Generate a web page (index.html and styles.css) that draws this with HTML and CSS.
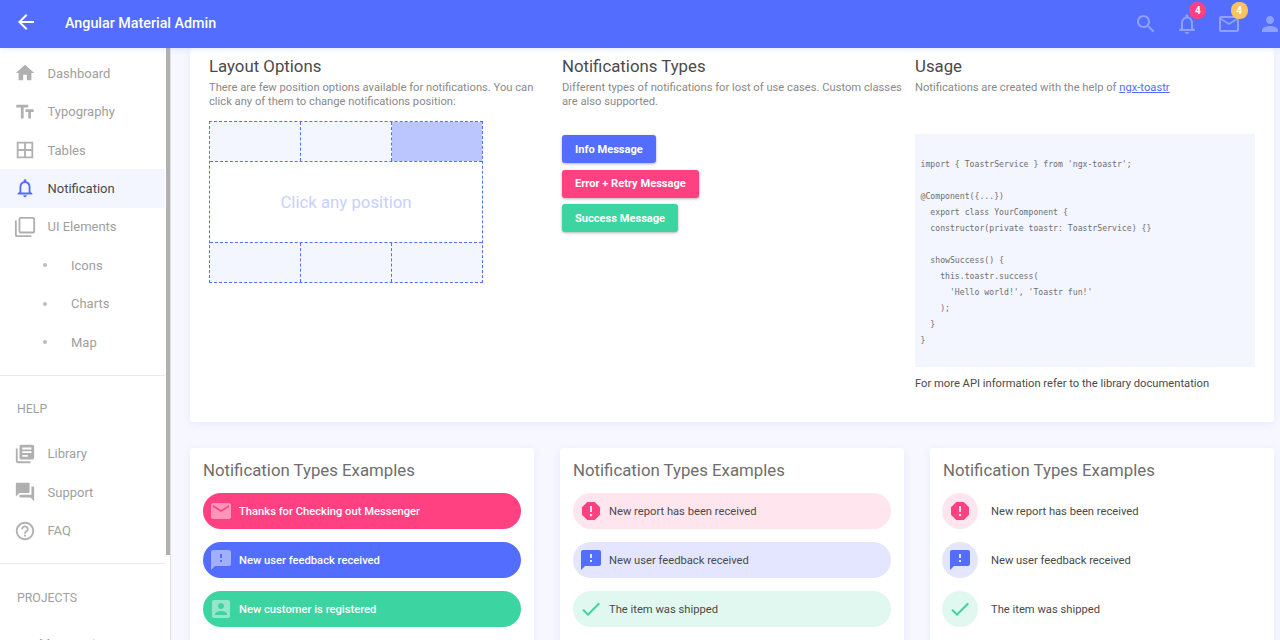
FILE: index.html
```html
<!DOCTYPE html>
<html>
	<head>
		<meta charset="UTF-8">
		<title>Angular Material Admin</title>
		<link rel="stylesheet" href="styles.css">
	</head>

	<body>
		<header class="topbar">
			<svg class="back-icon" viewBox="0 0 24 24"><path d="M20 11H7.83l5.59-5.59L12 4l-8 8 8 8 1.41-1.41L7.83 13H20v-2z"/></svg>
			<div class="brand">Angular Material Admin</div>
			<div class="top-icons">
				<svg viewBox="0 0 24 24"><path d="M15.5 14h-.79l-.28-.27C15.41 12.59 16 11.11 16 9.5 16 5.91 13.09 3 9.5 3S3 5.91 3 9.5 5.91 16 9.5 16c1.61 0 3.09-.59 4.23-1.57l.27.28v.79l5 4.99L20.49 19l-4.99-5zm-6 0C7.01 14 5 11.99 5 9.5S7.01 5 9.5 5 14 7.01 14 9.5 11.99 14 9.5 14z"/></svg>
				<div class="top-icon">
					<svg viewBox="0 0 24 24"><path d="M12 22c1.1 0 2-.9 2-2h-4c0 1.1.9 2 2 2zm6-6v-5c0-3.07-1.63-5.64-4.5-6.32V4c0-.83-.67-1.5-1.5-1.5s-1.5.67-1.5 1.5v.68C7.64 5.36 6 7.92 6 11v5l-2 2v1h16v-1l-2-2zm-2 1H8v-6c0-2.48 1.51-4.5 4-4.5s4 2.02 4 4.5v6z"/></svg>
					<span class="badge badge-pink">4</span>
				</div>
				<div class="top-icon">
					<svg viewBox="0 0 24 24"><path d="M20 4H4c-1.1 0-1.99.9-1.99 2L2 18c0 1.1.9 2 2 2h16c1.1 0 2-.9 2-2V6c0-1.1-.9-2-2-2zm0 14H4V8l8 5 8-5v10zm-8-7L4 6h16l-8 5z"/></svg>
					<span class="badge badge-orange">4</span>
				</div>
				<svg viewBox="0 0 24 24"><path d="M12 12c2.21 0 4-1.79 4-4s-1.79-4-4-4-4 1.79-4 4 1.79 4 4 4zm0 2c-2.67 0-8 1.34-8 4v2h16v-2c0-2.66-5.33-4-8-4z"/></svg>
			</div>
		</header>

		<div class="layout">
			<aside class="sidebar">
				<nav class="nav-group">
					<a class="nav-item"><svg viewBox="0 0 24 24"><path d="M10 20v-6h4v6h5v-8h3L12 3 2 12h3v8z"/></svg>Dashboard</a>
					<a class="nav-item"><svg viewBox="0 0 24 24"><path d="M2.5 4v3h5v12h3V7h5V4h-13zm19 5h-9v3h3v7h3v-7h3V9z"/></svg>Typography</a>
					<a class="nav-item"><svg viewBox="0 0 24 24"><path d="M3 3v18h18V3H3zm8 16H5v-6h6v6zm0-8H5V5h6v6zm8 8h-6v-6h6v6zm0-8h-6V5h6v6z"/></svg>Tables</a>
					<a class="nav-item active"><svg viewBox="0 0 24 24"><path d="M12 22c1.1 0 2-.9 2-2h-4c0 1.1.9 2 2 2zm6-6v-5c0-3.07-1.63-5.64-4.5-6.32V4c0-.83-.67-1.5-1.5-1.5s-1.5.67-1.5 1.5v.68C7.64 5.36 6 7.92 6 11v5l-2 2v1h16v-1l-2-2zm-2 1H8v-6c0-2.48 1.51-4.5 4-4.5s4 2.02 4 4.5v6z"/></svg>Notification</a>
					<a class="nav-item"><svg viewBox="0 0 24 24"><path d="M3 5H1v16c0 1.1.9 2 2 2h16v-2H3V5zm18-4H7c-1.1 0-2 .9-2 2v14c0 1.1.9 2 2 2h14c1.1 0 2-.9 2-2V3c0-1.1-.9-2-2-2zm0 16H7V3h14v14z"/></svg>UI Elements</a>
					<a class="nav-item sub"><i class="dot"></i>Icons</a>
					<a class="nav-item sub"><i class="dot"></i>Charts</a>
					<a class="nav-item sub"><i class="dot"></i>Map</a>
				</nav>
				<div class="nav-divider"></div>
				<div class="nav-label">HELP</div>
				<nav class="nav-group">
					<a class="nav-item"><svg viewBox="0 0 24 24"><path d="M4 6H2v14c0 1.1.9 2 2 2h14v-2H4V6zm16-4H8c-1.1 0-2 .9-2 2v12c0 1.1.9 2 2 2h12c1.1 0 2-.9 2-2V4c0-1.1-.9-2-2-2zm-1 9H9V9h10v2zm-4 4H9v-2h6v2zm4-8H9V5h10v2z"/></svg>Library</a>
					<a class="nav-item"><svg viewBox="0 0 24 24"><path d="M21 6h-2v9H6v2c0 .55.45 1 1 1h11l4 4V7c0-.55-.45-1-1-1zm-4 6V3c0-.55-.45-1-1-1H3c-.55 0-1 .45-1 1v14l4-4h10c.55 0 1-.45 1-1z"/></svg>Support</a>
					<a class="nav-item"><svg viewBox="0 0 24 24"><path d="M11 18h2v-2h-2v2zm1-16C6.48 2 2 6.48 2 12s4.48 10 10 10 10-4.48 10-10S17.52 2 12 2zm0 18c-4.41 0-8-3.59-8-8s3.59-8 8-8 8 3.59 8 8-3.59 8-8 8zm0-14c-2.21 0-4 1.79-4 4h2c0-1.1.9-2 2-2s2 .9 2 2c0 2-3 1.75-3 5h2c0-2.25 3-2.5 3-5 0-2.21-1.79-4-4-4z"/></svg>FAQ</a>
				</nav>
				<div class="nav-divider nav-divider-last"></div>
				<div class="nav-label nav-label-projects">PROJECTS</div>
				<div class="nav-project">My recent</div>
				<div class="scroll-thumb"></div>
			</aside>

			<main class="content">
				<section class="card options-card">
					<div class="option-col">
						<h2 class="col-title">Layout Options</h2>
						<p class="col-text">There are few position options available for notifications. You can click any of them to change notifications position:</p>
						<div class="position-box">
							<div class="pos-row">
								<div class="pos-cell"></div>
								<div class="pos-cell"></div>
								<div class="pos-cell selected"></div>
							</div>
							<div class="pos-middle">Click any position</div>
							<div class="pos-row">
								<div class="pos-cell"></div>
								<div class="pos-cell"></div>
								<div class="pos-cell"></div>
							</div>
						</div>
					</div>
					<div class="option-col">
						<h2 class="col-title">Notifications Types</h2>
						<p class="col-text">Different types of notifications for lost of use cases. Custom classes are also supported.</p>
						<div class="button-list">
							<button class="btn btn-blue">Info Message</button>
							<button class="btn btn-pink">Error + Retry Message</button>
							<button class="btn btn-green">Success Message</button>
						</div>
					</div>
					<div class="option-col">
						<h2 class="col-title">Usage</h2>
						<p class="col-text">Notifications are created with the help of <a class="link">ngx-toastr</a></p>
						<pre class="code">import { ToastrService } from 'ngx-toastr';

@Component({...})
  export class YourComponent {
  constructor(private toastr: ToastrService) {}

  showSuccess() {
    this.toastr.success(
      'Hello world!', 'Toastr fun!'
    );
  }
}</pre>
						<p class="api-note">For more API information refer to the library documentation</p>
					</div>
				</section>

				<div class="examples">
					<section class="card example-card">
						<h3 class="example-title">Notification Types Examples</h3>
						<div class="pill pill-pink">
							<svg viewBox="0 0 24 24"><path d="M20 4H4c-1.1 0-1.99.9-1.99 2L2 18c0 1.1.9 2 2 2h16c1.1 0 2-.9 2-2V6c0-1.1-.9-2-2-2zm0 4l-8 5-8-5V6l8 5 8-5v2z"/></svg>
							Thanks for Checking out Messenger
						</div>
						<div class="pill pill-blue">
							<svg viewBox="0 0 24 24"><path d="M20 2H4c-1.1 0-1.99.9-1.99 2L2 22l4-4h14c1.1 0 2-.9 2-2V4c0-1.1-.9-2-2-2zm-7 12h-2v-2h2v2zm0-4h-2V6h2v4z"/></svg>
							New user feedback received
						</div>
						<div class="pill pill-green">
							<svg viewBox="0 0 24 24"><path d="M3 5v14c0 1.1.89 2 2 2h14c1.1 0 2-.9 2-2V5c0-1.1-.9-2-2-2H5c-1.11 0-2 .9-2 2zm12 4c0 1.66-1.34 3-3 3s-3-1.34-3-3 1.34-3 3-3 3 1.34 3 3zm-9 8c0-2 4-3.1 6-3.1s6 1.1 6 3.1v1H6v-1z"/></svg>
							New customer is registered
						</div>
					</section>

					<section class="card example-card">
						<h3 class="example-title">Notification Types Examples</h3>
						<div class="pill light-pink">
							<svg viewBox="0 0 24 24"><path d="M15.73 3H8.27L3 8.27v7.46L8.27 21h7.46L21 15.73V8.27L15.73 3zM12 17.3c-.72 0-1.3-.58-1.3-1.3 0-.72.58-1.3 1.3-1.3.72 0 1.3.58 1.3 1.3 0 .72-.58 1.3-1.3 1.3zm1-4.3h-2V7h2v6z"/></svg>
							New report has been received
						</div>
						<div class="pill light-blue">
							<svg viewBox="0 0 24 24"><path d="M20 2H4c-1.1 0-1.99.9-1.99 2L2 22l4-4h14c1.1 0 2-.9 2-2V4c0-1.1-.9-2-2-2zm-7 12h-2v-2h2v2zm0-4h-2V6h2v4z"/></svg>
							New user feedback received
						</div>
						<div class="pill light-green">
							<svg viewBox="0 0 24 24"><path d="M9 16.17L4.83 12l-1.42 1.41L9 19 21 7l-1.41-1.41z"/></svg>
							The item was shipped
						</div>
					</section>

					<section class="card example-card">
						<h3 class="example-title">Notification Types Examples</h3>
						<div class="round-row">
							<div class="round light-pink"><svg viewBox="0 0 24 24"><path d="M15.73 3H8.27L3 8.27v7.46L8.27 21h7.46L21 15.73V8.27L15.73 3zM12 17.3c-.72 0-1.3-.58-1.3-1.3 0-.72.58-1.3 1.3-1.3.72 0 1.3.58 1.3 1.3 0 .72-.58 1.3-1.3 1.3zm1-4.3h-2V7h2v6z"/></svg></div>
							New report has been received
						</div>
						<div class="round-row">
							<div class="round light-blue"><svg viewBox="0 0 24 24"><path d="M20 2H4c-1.1 0-1.99.9-1.99 2L2 22l4-4h14c1.1 0 2-.9 2-2V4c0-1.1-.9-2-2-2zm-7 12h-2v-2h2v2zm0-4h-2V6h2v4z"/></svg></div>
							New user feedback received
						</div>
						<div class="round-row">
							<div class="round light-green"><svg viewBox="0 0 24 24"><path d="M9 16.17L4.83 12l-1.42 1.41L9 19 21 7l-1.41-1.41z"/></svg></div>
							The item was shipped
						</div>
					</section>
				</div>
			</main>
		</div>
	</body>

</html>
```

FILE: styles.css
```css
* {
	padding: 0;
	margin: 0;
	box-sizing: border-box;
}

html,
body {
	height: 640px;
	overflow: hidden;
}

body {
	font-family: "Roboto", "Liberation Sans", sans-serif;
	font-size: 11.2px;
	color: #4a4a4a;
	background: #f6f7ff;
}

svg {
	display: block;
	flex: none;
	fill: currentColor;
}

/* top bar */
.topbar {
	display: flex;
	align-items: center;
	height: 48px;
	padding-left: 14px;
	background: #536dfe;
	color: #fff;
	box-shadow: 0 1px 6px rgba(83, 109, 254, 0.15);
	position: relative;
	z-index: 2;
}

.back-icon {
	width: 24px;
	height: 24px;
	margin-top: -4px;
}

.brand {
	margin-left: 27px;
	margin-top: -3px;
	font-size: 14.3px;
	font-weight: 500;
}

.top-icons {
	display: flex;
	align-items: center;
	gap: 17.3px;
	margin-left: auto;
	margin-right: -2px;
	color: rgba(255, 255, 255, 0.35);
}

.top-icons svg {
	width: 24px;
	height: 24px;
}

.top-icon {
	position: relative;
}

.badge {
	position: absolute;
	top: -10px;
	left: 14px;
	width: 17px;
	height: 17px;
	border-radius: 8px;
	color: #fff;
	font-size: 10px;
	font-weight: 700;
	line-height: 17px;
	text-align: center;
}

.badge-pink {
	background: #ff4081;
}

.badge-orange {
	background: #ffc260;
}

/* sidebar */
.layout {
	display: flex;
	height: 592px;
}

.sidebar {
	position: relative;
	flex: none;
	width: 171px;
	padding: 6.1px 5px 0 0;
	background: #fff;
	border-right: 1px solid #e0e0e0;
	overflow: hidden;
}

.scroll-thumb {
	position: absolute;
	top: 0;
	left: 166px;
	width: 4px;
	height: 507px;
	background: #b0b0b0;
}

.nav-item {
	display: flex;
	align-items: center;
	gap: 11.5px;
	height: 38.4px;
	padding-left: 14px;
	color: #a0a0a0;
	font-size: 13px;
}

.nav-item svg {
	width: 22px;
	height: 22px;
	color: #b0b0b0;
}

.nav-item.active {
	background: #f3f5ff;
	color: #4a4a4a;
}

.nav-item.active svg {
	color: #536dfe;
}

.nav-item.sub {
	gap: 24px;
	padding-left: 43px;
}

.dot {
	width: 4px;
	height: 4px;
	border-radius: 50%;
	background: #bdbdbd;
}

.nav-divider {
	height: 1px;
	margin-top: 13.7px;
	background: #e9e9e9;
}

.nav-divider-last {
	margin-top: 13px;
}

.nav-label {
	margin: 25.3px 0 17.5px 17px;
	color: #a0a0a0;
	font-size: 12.3px;
	line-height: 16px;
}

.nav-label-projects {
	margin-top: 26.5px;
}

.nav-project {
	margin: 30px 0 0 39px;
	color: #a0a0a0;
	font-size: 13px;
}

/* main content */
.content {
	flex: 1;
	padding: 0 6px 0 19px;
	overflow: hidden;
}

.card {
	background: #fff;
	border-radius: 3px;
	box-shadow: 0 2px 8px rgba(176, 186, 255, 0.2);
}

.options-card {
	display: grid;
	grid-template-columns: repeat(3, 340px);
	gap: 13px;
	height: 373.5px;
	padding: 8px 19px 0;
}

.col-title {
	font-size: 16.8px;
	font-weight: 400;
	line-height: 21px;
	color: #4a4a4a;
}

.col-text {
	min-height: 28px;
	margin-top: 4px;
	margin-bottom: -1px;
	line-height: 14px;
	color: #8a8a8a;
}

.link {
	color: #536dfe;
	text-decoration: underline;
}

.position-box {
	width: 274px;
	height: 162px;
	margin-top: 13px;
	border: 1px dashed #536dfe;
}

.pos-row {
	display: flex;
	height: 39px;
}

.pos-cell {
	flex: 1;
	background: #f3f5ff;
	border-right: 1px dashed #536dfe;
}

.pos-cell:last-child {
	border-right: 0;
}

.pos-cell.selected {
	background: #bcc6fe;
}

.pos-middle {
	display: flex;
	align-items: center;
	justify-content: center;
	height: 82px;
	border-top: 1px dashed #536dfe;
	border-bottom: 1px dashed #536dfe;
	color: #c8d0fe;
	font-size: 16.8px;
}

.button-list {
	display: flex;
	flex-direction: column;
	align-items: flex-start;
	gap: 6.5px;
	margin-top: 27px;
}

.btn {
	height: 28px;
	padding: 0 13px;
	border: 0;
	border-radius: 3px;
	color: #fff;
	font-family: inherit;
	font-size: 11.1px;
	font-weight: 700;
	box-shadow: 0 1px 3px rgba(0, 0, 0, 0.3);
}

.btn-blue {
	background: #536dfe;
}

.btn-pink {
	background: #ff4081;
}

.btn-green {
	background: #3cd4a0;
}

.code {
	height: 233px;
	margin-top: 26px;
	padding: 22px 5.5px 0;
	background: #f3f5ff;
	color: #6e6e6e;
	font-family: "DejaVu Sans Mono", monospace;
	font-size: 8.17px;
	line-height: 16px;
}

.api-note {
	margin-top: 10px;
	line-height: 14px;
	color: #4a4a4a;
}

/* examples row */
.examples {
	display: grid;
	grid-template-columns: repeat(3, 344px);
	gap: 26px;
	margin-top: 26.5px;
}

.example-card {
	height: 300px;
	padding: 12px 13px 0;
}

.example-title {
	margin-bottom: 12px;
	font-size: 16.8px;
	font-weight: 400;
	line-height: 21px;
	color: #6e6e6e;
}

.pill {
	display: flex;
	align-items: center;
	gap: 6px;
	height: 36px;
	margin-bottom: 13px;
	padding-left: 6px;
	border-radius: 18px;
}

.pill svg,
.round svg {
	width: 24px;
	height: 24px;
}

.pill-pink {
	background: #ff4081;
}

.pill-blue {
	background: #536dfe;
}

.pill-green {
	background: #3cd4a0;
}

.pill-pink,
.pill-blue,
.pill-green {
	color: #fff;
	font-weight: 500;
}

.pill-pink svg,
.pill-blue svg,
.pill-green svg {
	color: rgba(255, 255, 255, 0.45);
}

.light-pink {
	background: #ffe5ee;
}

.light-pink svg {
	color: #ff4081;
}

.light-blue {
	background: #e3e6fe;
}

.light-blue svg {
	color: #536dfe;
}

.light-green {
	background: #e0f8ef;
}

.light-green svg {
	color: #3cd4a0;
}

.round-row {
	display: flex;
	align-items: center;
	gap: 13px;
	height: 36px;
	margin-bottom: 13px;
	margin-left: -1px;
}

.round {
	display: flex;
	align-items: center;
	justify-content: center;
	width: 36px;
	height: 36px;
	border-radius: 50%;
}
```
